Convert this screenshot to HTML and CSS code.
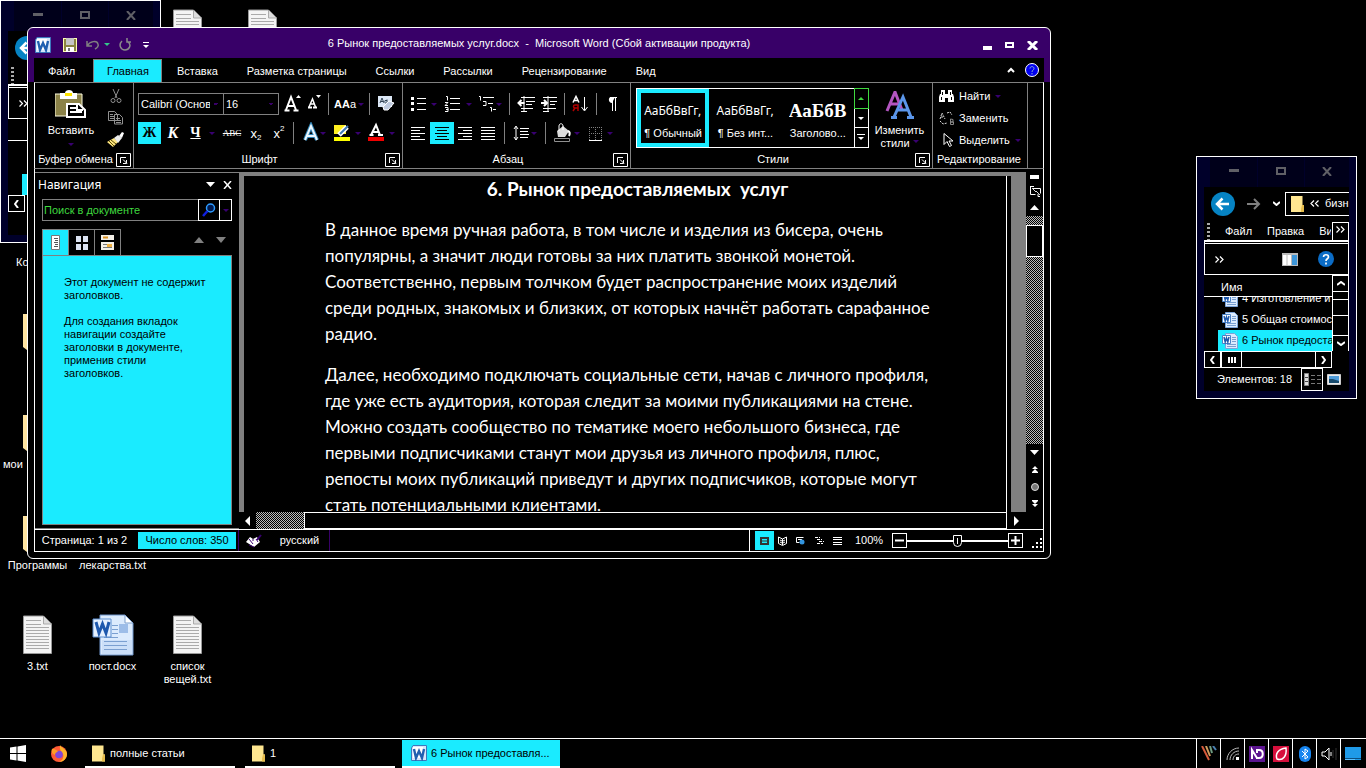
FILE: index.html
```html
<!DOCTYPE html>
<html lang="ru">
<head>
<meta charset="utf-8">
<title>6 Рынок предоставляемых услуг.docx - Microsoft Word</title>
<link rel="stylesheet" href="styles.css">
</head>
<body>
<svg class="defs" aria-hidden="true">
  <symbol id="txt" viewBox="0 0 30 40"><path d="M.5 1h20l8 8v29.500h-28z" fill="#f4f4f4" stroke="#999"/><path d="M20.500 1v8h8" fill="#ddd" stroke="#aaa"/><path d="M3 5.500h15M3 9.500h15M3 12.500h23M3 15.500h23M3 18.500h23M3 21.500h23M3 24.500h23M3 27.500h23M3 30.500h23M3 33.500h23" stroke="#aaa"/></symbol>
  <symbol id="folder" viewBox="0 0 13 16"><path d="M0 0h11.500v9H13v7H0z" fill="#ffe690"/><path d="M11 9h2v7h-3v-3z" fill="#e8bd4c"/></symbol>
  <symbol id="docx" viewBox="0 0 42 42"><path d="M8 1h25l8 8v32H8z" fill="#dcebfd" stroke="#6e95cb"/><path d="M10 26h30v14H10z" fill="#cbdff8"/><path d="M33 1v8h8z" fill="#fff" stroke="#7d9fcd"/><path d="M12 27.500h23M12 31.500h23M12 35.500h23M20 11.500h6M20 15.500h6M20 19.500h6M12 23.500h14" stroke="#7a9fd0"/><path d="M27 10h9v9h-9z" fill="#9dbde8"/><path d="M1 5h18v18H1z" fill="#e6f1ff" stroke="#5c8fd0"/><path d="M4 8l3 11 3.500-9L14 19l3-11" fill="none" stroke="#1f59ad" stroke-width="3"/></symbol>
  <symbol id="docs" viewBox="0 0 16 16"><path d="M3.500 .5h9l3 3v12h-12z" fill="#dcebfd" stroke="#7ba3d8"/><path d="M10 4.500h4M10 6.500h4M10 8.500h4M5 11.500h9M5 13.500h9" stroke="#7a9fd0"/><path d="M.500 2.500h8v8h-8z" fill="#fff" stroke="#4b83c8"/><path d="M2 4l1.200 5 1.300-4 1.300 4L7 4" fill="none" stroke="#1f59ad" stroke-width="1.500"/></symbol>
  <symbol id="word" viewBox="0 0 16 16"><path d="M2 .5h13.500v15H.5V3z" fill="#d5e6fa" stroke="#3c78bd"/><path d="M2 2h10v11H2z" fill="#fff"/><path d="M3 4l2 9 3-7 3 7 2-9" fill="none" stroke="#2060b0" stroke-width="2.400"/></symbol>
  <symbol id="launch" viewBox="0 0 15 14"><path d="M.5.500h14v13H.5z" fill="#000" stroke="#fff"/><path d="M4.500 10V4.500H10M7 6.500l4 4M10.500 7v3.500H7" fill="none" stroke="#fff"/></symbol>
  <symbol id="down" viewBox="0 0 6 3"><path d="M0 0h6L3 3z" fill="#380070"/></symbol>
  <symbol id="back" viewBox="0 0 24 24"><circle cx="12" cy="12" r="12" fill="#0683c3"/><path d="M18 12H7M11.500 6.500L6 12l5.500 5.500" fill="none" stroke="#fff" stroke-width="2.500"/></symbol>
  <symbol id="chev" viewBox="0 0 9 7"><path d="M.5.500l3 3-3 3M5 .5l3 3-3 3" fill="none" stroke="#fff" stroke-width="1.200"/></symbol>
  <symbol id="preview" viewBox="0 0 16 13"><path d="M0 0h16v13H0z" fill="#b9b9b9"/><path d="M1 2h8v10H1z" fill="#fff"/><path d="M5 2v10" stroke="#bbb"/><path d="M10 2h5v10h-5z" fill="#3d96d9"/></symbol>
  <symbol id="help" viewBox="0 0 16 16"><circle cx="8" cy="8" r="8" fill="#0b6cc6"/><path d="M5.500 6c0-3 5-3 5 0 0 2-2.500 1.500-2.500 4M8 11.500v2" fill="none" stroke="#fff" stroke-width="1.700"/></symbol>
  <symbol id="details" viewBox="0 0 17 13"><path d="M.5.500h4v12h-4z" fill="#ddd" stroke="#888"/><path d="M1 4.500h3M1 8.500h3" stroke="#444"/><path d="M7 2.500h4M13 2.500h4M7 6.500h4M13 6.500h4M7 10.500h4M13 10.500h4" stroke="#777"/></symbol>
  <symbol id="thumbs" viewBox="0 0 14 11"><path d="M.5.500h13v10H.5z" fill="#e9e9e9" stroke="#ccc"/><path d="M2 2h10v7H2z" fill="#4e9bd8"/><path d="M2 5h4l6 2v2H2z" fill="#174a6c"/></symbol>
</svg>

<main class="desktop">
  <section class="icons" aria-label="Рабочий стол">
    <a class="shortcut c3 r1" href="#"><svg width="30" height="40"><use href="#txt"/></svg></a>
    <a class="shortcut c4 r1" href="#"><svg width="30" height="40"><use href="#txt"/></svg></a>
    <a class="shortcut c1 r3 cut" href="#"><span>Ко</span></a>
    <a class="shortcut c1 r4" href="#"><svg width="30" height="36" viewBox="0 0 30 36"><path d="M0 0h26v18h4v18H4l-4-3z" fill="#ffe4a0"/></svg></a>
    <a class="shortcut c1 r5 cut-long" href="#"><svg width="30" height="36" viewBox="0 0 30 36"><path d="M0 0h26v18h4v18H4l-4-3z" fill="#ffe4a0"/></svg><span>мои</span></a>
    <a class="shortcut c1 r6" href="#"><svg width="30" height="36" viewBox="0 0 30 36"><path d="M0 0h26v18h4v18H4l-4-3z" fill="#ffe4a0"/></svg><span>Программы</span></a>
    <a class="shortcut c2 r6" href="#"><span>лекарства.txt</span></a>
    <a class="shortcut c1 r7" href="#"><svg width="30" height="40"><use href="#txt"/></svg><span>3.txt</span></a>
    <a class="shortcut c2 r7" href="#"><svg width="42" height="42"><use href="#docx"/></svg><span>пост.docx</span></a>
    <a class="shortcut c3 r7" href="#"><svg width="30" height="40"><use href="#txt"/></svg><span>список вещей.txt</span></a>
  </section>

  <section class="explorer explorer-left" aria-label="Проводник">
    <header class="ex-title">
      <button aria-label="Свернуть"><svg width="10" height="4"><path d="M0 0h10v3H0z" fill="#606066"/></svg></button>
      <button aria-label="Развернуть"><svg width="10" height="8"><path d="M1 1h8v6H1z" fill="none" stroke="#606066" stroke-width="2"/></svg></button>
      <button aria-label="Закрыть"><svg width="10" height="9"><path d="M1 0l8 9M9 0L1 9" stroke="#606066" stroke-width="2"/></svg></button>
    </header>
    <div class="ex-nav"><button aria-label="Назад"><svg width="24" height="24"><use href="#back"/></svg></button></div>
    <div class="ex-menu"><i class="dots"></i></div>
    <div class="ex-tools"><button aria-label="Ещё"><svg width="9" height="7"><use href="#chev"/></svg></button></div>
    <div class="ex-body"><div class="ex-list"><div class="ex-head"></div><div class="ex-rows"><a href="#" aria-label="Файл"></a><a href="#" aria-label="Файл"></a><a class="sel" href="#" aria-label="Файл"></a></div></div></div>
    <div class="ex-hscroll"><button aria-label="Влево"><svg width="5" height="8"><path d="M4 0L1 4l3 4" fill="none" stroke="#fff" stroke-width="2"/></svg></button></div>
    <footer class="ex-status"></footer>
  </section>

  <section class="explorer explorer-right" aria-label="бизнес">
    <header class="ex-title">
      <button aria-label="Свернуть"><svg width="10" height="4"><path d="M0 0h10v3H0z" fill="#606066"/></svg></button>
      <button aria-label="Развернуть"><svg width="10" height="8"><path d="M1 1h8v6H1z" fill="none" stroke="#606066" stroke-width="2"/></svg></button>
      <button aria-label="Закрыть"><svg width="10" height="9"><path d="M1 0l8 9M9 0L1 9" stroke="#606066" stroke-width="2"/></svg></button>
    </header>
    <div class="ex-nav">
      <button aria-label="Назад"><svg width="24" height="24"><use href="#back"/></svg></button>
      <button aria-label="Вперёд"><svg width="14" height="12"><path d="M0 6h12M7 1l5 5-5 5" fill="none" stroke="#808080" stroke-width="2"/></svg></button>
      <button aria-label="История"><svg width="7" height="5"><path d="M0 1l3.500 3L7 1" fill="none" stroke="#fff" stroke-width="2"/></svg></button>
      <div class="address"><svg width="13" height="16"><use href="#folder"/></svg><svg class="flip" width="9" height="7"><use href="#chev"/></svg><span>бизн</span></div>
    </div>
    <nav class="ex-menu"><i class="dots"></i><a href="#">Файл</a><a href="#">Правка</a><a href="#">Ви</a><button aria-label="Ещё"><svg width="9" height="7"><use href="#chev"/></svg></button></nav>
    <div class="ex-tools"><button aria-label="Ещё"><svg width="9" height="7"><use href="#chev"/></svg></button><button class="push" aria-label="Область просмотра"><svg width="16" height="13"><use href="#preview"/></svg></button><button aria-label="Справка"><svg width="16" height="16"><use href="#help"/></svg></button></div>
    <div class="ex-body">
      <div class="ex-list">
        <div class="ex-head">Имя</div>
        <div class="ex-rows">
          <a href="#"><svg width="16" height="16"><use href="#docs"/></svg>4 Изготовление и</a>
          <a href="#"><svg width="16" height="16"><use href="#docs"/></svg>5 Общая стоимос</a>
          <a class="sel" href="#"><svg width="16" height="16"><use href="#docs"/></svg>6 Рынок предоста</a>
        </div>
      </div>
      <div class="ex-vscroll">
        <button aria-label="Вверх"><svg width="8" height="5"><path d="M0 4l4-3 4 3" fill="none" stroke="#fff" stroke-width="2"/></svg></button>
        <span class="v1"></span><span class="v2"></span><span class="v3"></span>
        <button aria-label="Вниз"><svg width="8" height="5"><path d="M0 1l4 3 4-3" fill="none" stroke="#fff" stroke-width="2"/></svg></button>
      </div>
    </div>
    <div class="ex-hscroll">
      <button aria-label="Влево"><svg width="5" height="8"><path d="M4 0L1 4l3 4" fill="none" stroke="#fff" stroke-width="2"/></svg></button>
      <span class="ex-thumb"><svg width="8" height="6"><path d="M1 0v6M4 0v6M7 0v6" stroke="#fff" stroke-width="2"/></svg></span><span class="ex-track"></span>
      <button aria-label="Вправо"><svg width="5" height="8"><path d="M1 0l3 4-3 4" fill="none" stroke="#fff" stroke-width="2"/></svg></button>
    </div>
    <footer class="ex-status"><span>Элементов: 18</span><button class="boxed" aria-label="Таблица"><svg width="17" height="13"><use href="#details"/></svg></button><button aria-label="Эскизы"><svg width="14" height="11"><use href="#thumbs"/></svg></button></footer>
  </section>

  <section class="word" aria-label="Microsoft Word">
    <header class="titlebar">
      <div class="quick">
        <svg width="16" height="16"><use href="#word"/></svg>
        <button aria-label="Сохранить"><svg width="14" height="14"><path d="M0 0h14v14H0z" fill="#ffffb0"/><path d="M1 1h12v12H1z" fill="#8a8440"/><path d="M3 0h8v7H3z" fill="#c6c6c6"/><path d="M3 9h8v5H3z" fill="#fff"/><path d="M5 10h2v3H5z" fill="#777"/></svg></button>
        <button aria-label="Отменить"><svg width="24" height="10"><path d="M1 1v5h5M1 6c3-5 10-6 11-2 1 2-1 4-3 5" fill="none" stroke="#808080" stroke-width="1.500"/><path d="M18 3h6l-3 3z" fill="#35c88a"/></svg></button>
        <button aria-label="Повторить"><svg width="12" height="13"><path d="M3 3C-1 7 2 12 6 12s7-5 3-8M8 0v4h4" fill="none" stroke="#8a8a8a" stroke-width="1.500"/></svg></button>
        <button class="more" aria-label="Настройка"><svg width="6" height="6"><path d="M0 0h6v1H0zM0 3h6L3 6z" fill="#fff"/></svg></button>
      </div>
      <h1>6 Рынок предоставляемых услуг.docx&nbsp; - &nbsp;Microsoft Word (Сбой активации продукта)</h1>
      <div class="winbtns">
        <button aria-label="Свернуть"><svg width="10" height="10"><path d="M0 6h9v4H0z" fill="#fff"/></svg></button>
        <button aria-label="Развернуть"><svg width="10" height="8"><path d="M1 2h7v4H1z" fill="none" stroke="#fff" stroke-width="2"/></svg></button>
        <button aria-label="Закрыть"><svg width="12" height="9"><path d="M1 0l9 9M10 0L1 9" stroke="#fff" stroke-width="3"/></svg></button>
      </div>
    </header>
    <nav class="tabs">
      <a href="#">Файл</a><a class="on" href="#">Главная</a><a href="#">Вставка</a><a href="#">Разметка страницы</a><a href="#">Ссылки</a><a href="#">Рассылки</a><a href="#">Рецензирование</a><a href="#">Вид</a>
      <span class="tabs-end">
        <button aria-label="Свернуть ленту"><svg width="8" height="6"><path d="M1 5l3-3 3 3" fill="none" stroke="#fff" stroke-width="2"/></svg></button>
        <button aria-label="Справка"><svg width="14" height="14"><circle cx="7" cy="7" r="6.500" fill="#0000f0" stroke="#fff"/><path d="M5 5.500c0-2.500 4-2.500 4 0C9 7 7 7 7 9M7 10v1.500" fill="none" stroke="#8ac"/></svg></button>
      </span>
    </nav>

    <div class="ribbon">
      <section class="group g-clip">
        <div class="clip">
          <button class="paste"><svg width="32" height="28" viewBox="0 0 32 28"><path d="M0 4h27v22H0z" fill="#8b8248" stroke="#fffde0"/><path d="M5 3h5c0-4 8-4 8 0h4v6H5z" fill="#fff"/><path d="M10 3h7v3h-7z" fill="#ffe400"/><path d="M12 14h12l6 6v7H12z" fill="#000" stroke="#fff" stroke-width="2"/><path d="M15 18h6M15 22h12M22 15v5h6" stroke="#fff" fill="none" stroke-width="2"/></svg><span>Вставить</span><svg width="6" height="3"><use href="#down"/></svg></button>
          <div class="clip-side">
            <button aria-label="Вырезать"><svg width="12" height="15"><path d="M3 0l4 9M9 0L5 9" stroke="#909090"/><circle cx="3" cy="11.500" r="2" fill="none" stroke="#909090"/><circle cx="9" cy="11.500" r="2" fill="none" stroke="#909090"/></svg></button>
            <button aria-label="Копировать"><svg width="16" height="14"><path d="M.5.500h6l3 3v6h-9zM6.500 3.500h5l3 3v6.500h-8z" fill="#000" stroke="#909090"/><path d="M2 3.500h3M2 5.500h4M2 7.500h4M8 7.500h4M8 9.500h5M8 11.500h5" stroke="#909090"/></svg></button>
            <button aria-label="Формат по образцу"><svg width="17" height="16"><path d="M0 10l7-4 4 4-5 5z" fill="#ffe680"/><path d="M2 9l5 5M4 8l5 4" stroke="#5c4b00"/><path d="M7 6l4-3 4 3-4 5z" fill="#eee"/><path d="M12 4l3-4 2 1-2 5z" fill="#fff"/></svg></button>
          </div>
        </div>
        <footer><b>Буфер обмена</b><button aria-label="Параметры"><svg width="15" height="14"><use href="#launch"/></svg></button></footer>
      </section>

      <section class="group g-font">
        <div class="tools">
          <select class="font-name" aria-label="Шрифт"><option>Calibri (Основн</option></select><select class="font-size" aria-label="Размер"><option>16</option></select>
          <button aria-label="Увеличить"><svg width="24" height="22"><path d="M5.500 17.500h5M14.500 17.500h5" stroke="#fff" stroke-width="2"/><path d="M7 17l5-13 5 13M9 13h6" stroke="#fff" stroke-width="2" fill="none"/><path d="M17 5h5l-2.500-3z" fill="#fff"/></svg></button>
          <button aria-label="Уменьшить"><svg width="22" height="22"><path d="M5 14.500h4M10 14.500h4" stroke="#fff" stroke-width="2"/><path d="M6 14l3.500-8 3 8M7 11h4" stroke="#fff" stroke-width="1.500" fill="none"/><path d="M13 2h5l-2.500 3z" fill="#fff"/></svg></button>
          <i class="sep"></i>
          <button class="case"><b>AA</b>a<svg width="6" height="3"><use href="#down"/></svg></button>
          <i class="sep"></i>
          <button aria-label="Очистить"><svg width="24" height="22"><path d="M5 3h14v11H5z" fill="#dce7f5"/><path d="M7 10l2-5 2 5M8 8.500h2M14 7.500h-2c-1 3 2 3 2 2v-3" stroke="#345" fill="none"/><path d="M10 14l6-6 5 2-6 7h-4z" fill="#bfcbe0" stroke="#fff"/></svg></button>
        </div>
        <div class="tools">
          <button class="on bold">Ж</button><button class="ital">К</button><button class="under"><u>Ч</u><svg width="6" height="3"><use href="#down"/></svg></button><button class="strike">ABC</button><button class="idx">x<sub>2</sub></button><button class="idx">x<sup>2</sup></button><i class="sep"></i>
          <button aria-label="Эффекты"><svg width="31" height="22"><path d="M8 18l6-14 6 14M10 14h8" stroke="#2f83b5" stroke-width="4" fill="none"/><path d="M8 18l6-14 6 14M10 14h8" stroke="#eaf7ff" stroke-width="2" fill="none"/><path d="M23 10h6l-3 3z" fill="#380070"/></svg></button>
          <button aria-label="Цвет выделения"><svg width="35" height="22"><path d="M6 3h12v9H6z" fill="#ffef20"/><path d="M6 15h16v4H6z" fill="#ffff00"/><path d="M11 13l8-8" stroke="#fff" stroke-width="5"/><path d="M12 12l8-8" stroke="#3f79b5" stroke-width="2"/><path d="M27 10h6l-3 3z" fill="#380070"/></svg></button>
          <button aria-label="Цвет текста"><svg width="35" height="22"><path d="M5 15h16v4H5z" fill="#f00000"/><path d="M8 13l5-10 4 10M10 10h6M6.500 13h4M15 13h5" stroke="#fff" stroke-width="2" fill="none"/><path d="M26 10h6l-3 3z" fill="#380070"/></svg></button>
        </div>
        <footer><b>Шрифт</b><button aria-label="Параметры"><svg width="15" height="14"><use href="#launch"/></svg></button></footer>
      </section>

      <section class="group g-par">
        <div class="tools">
          <button aria-label="Маркеры"><svg width="35" height="22"><path d="M5 4h3v3H5zM5 9h3v3H5zM5 15h3v3H5z" fill="#fff"/><path d="M11 5.500h9M11 10.500h9M11 16.500h9" stroke="#fff"/><path d="M25 10h6l-3 3z" fill="#380070"/></svg></button>
          <button aria-label="Нумерация"><svg width="35" height="22"><path d="M5 3.500h1.500v4M4 9.500h3l-3 3h3M4 14.500h3v2H5M7 16v2.500H4M9 5.500h10M9 10.500h10M9 16.500h10" stroke="#fff" fill="none"/><path d="M25 10h6l-3 3z" fill="#380070"/></svg></button>
          <button aria-label="Многоуровневый"><svg width="30" height="22"><path d="M3 3.500h1.500v4M7 4.500h11M7 8.500h3v4M7 12.500h3M12 10.500h5M14 14.500h1.500v4M17 16.500h3" stroke="#fff" fill="none"/><path d="M20 10h6l-3 3z" fill="#380070"/></svg></button>
          <i class="sep"></i>
          <button aria-label="Уменьшить отступ"><svg width="24" height="22"><path d="M8 4.500h14M13 8.500h9M13 11.500h6M8 15.500h12M8 18.500h6M11 3v16" stroke="#fff"/><path d="M5.500 10h6M8.500 7l-3 3 3 3" stroke="#fff" stroke-width="2" fill="none"/></svg></button>
          <button aria-label="Увеличить отступ"><svg width="24" height="22"><path d="M6 4.500h14M13 8.500h7M13 11.500h5M6 15.500h13M6 18.500h6M11 3v16" stroke="#fff"/><path d="M4 10h6M7 7l3 3-3 3" stroke="#fff" stroke-width="2" fill="none"/></svg></button>
          <i class="sep"></i>
          <button aria-label="Сортировка"><svg width="25" height="22"><path d="M5 9.500l3-6 3 6M6 7.500h4" stroke="#fff" fill="none" stroke-width="1.500"/><path d="M10 18v-6H7c-2 0-2 3 0 3h3M7 15l-2 3" stroke="#b00000" fill="none" stroke-width="1.500"/><path d="M16.500 4v13M13.500 14l3 4 3-4" stroke="#fff" fill="none"/></svg></button>
          <i class="sep"></i>
          <button aria-label="Знаки"><svg width="24" height="22"><path d="M15 4H11c-3 0-3 6 1 6z" fill="#fff"/><path d="M10 4.500h7M12.500 4v14M15.500 4v14" stroke="#fff" fill="none"/></svg></button>
        </div>
        <div class="tools">
          <button aria-label="По левому краю"><svg width="24" height="22"><path d="M5 5.500h14M5 8.500h9M5 11.500h14M5 14.500h9M5 17.500h14" stroke="#fff"/></svg></button>
          <button class="on" aria-label="По центру"><svg width="24" height="22"><path d="M5 5.500h14M7 8.500h10M5 11.500h14M7 14.500h10M5 17.500h14" stroke="#000"/></svg></button>
          <button aria-label="По правому краю"><svg width="24" height="22"><path d="M4 5.500h14M9 8.500h9M4 11.500h14M9 14.500h9M4 17.500h14" stroke="#fff"/></svg></button>
          <button aria-label="По ширине"><svg width="23" height="22"><path d="M3 5.500h14M3 8.500h14M3 11.500h14M3 14.500h14M3 17.500h14" stroke="#fff"/></svg></button>
          <i class="sep"></i>
          <button aria-label="Интервал"><svg width="34" height="22"><path d="M8 5v13M6 7l2-3 2 3M6 15l2 3 2-3M12 6.500h9M12 9.500h8M12 12.500h9M12 15.500h8" stroke="#fff" fill="none"/><path d="M23 10h6l-3 3z" fill="#380070"/></svg></button>
          <i class="sep"></i>
          <button aria-label="Заливка"><svg width="35" height="22"><path d="M8 9l6-5 6 5-4 6H9z" fill="#ddd"/><path d="M10 9V4c0-3 4-3 4 0v4" stroke="#fff" fill="none"/><path d="M19 9c2 1 2 3 1 5" stroke="#fff" stroke-width="2" fill="none"/><path d="M5.500 16.500h15v3h-15z" stroke="#909090" fill="#000"/><path d="M25 10h6l-3 3z" fill="#380070"/></svg></button>
          <button aria-label="Границы"><svg width="35" height="22"><path d="M5.500 5v13M11.500 5v13M17.500 5v13M5 5.500h13M5 11.500h13" stroke="#808080" stroke-dasharray="1 1"/><path d="M5 18.500h13" stroke="#fff"/><path d="M23 10h6l-3 3z" fill="#380070"/></svg></button>
        </div>
        <footer><b>Абзац</b><button aria-label="Параметры"><svg width="15" height="14"><use href="#launch"/></svg></button></footer>
      </section>

      <section class="group g-styles">
        <div class="styles-row">
          <div class="gallery">
            <button class="style chosen"><span class="sample">АаБбВвГг,</span><span>¶ Обычный</span></button>
            <button class="style"><span class="sample">АаБбВвГг,</span><span>¶ Без инт...</span></button>
            <button class="style"><span class="sample heading">АаБбВ</span><span>Заголово...</span></button>
            <div class="gal-scroll">
              <button class="green" aria-label="Вверх"><svg width="6" height="3"><path d="M0 3h6L3 0z" fill="#3fd83f"/></svg></button>
              <button aria-label="Вниз"><svg width="6" height="3"><path d="M0 0h6L3 3z" fill="#fff"/></svg></button>
              <button aria-label="Ещё"><svg width="8" height="7"><path d="M0 .5h8" stroke="#fff"/><path d="M1 3h6L4 6z" fill="#fff"/></svg></button>
            </div>
          </div>
          <button class="change"><svg width="30" height="28"><path d="M2 20L10 1l7 18M5 13h9" fill="none" stroke="#b355c0" stroke-width="3"/><path d="M9 26L18 6l8 20M12 19h11M6 26.500h6M22 26.500h7" fill="none" stroke="#5b96ea" stroke-width="3"/></svg><span>Изменить</span><span>стили <svg width="6" height="3"><use href="#down"/></svg></span></button>
        </div>
        <footer><b>Стили</b><button aria-label="Параметры"><svg width="15" height="14"><use href="#launch"/></svg></button></footer>
      </section>

      <section class="group g-edit">
        <div class="edit">
          <button><svg width="15" height="14"><path d="M2 1h4v4H2zM9 1h4v4H9zM1 5h5v8H0V8zM9 5h5l1 3v5H9zM6 5h3v4H6z" fill="#fff"/><path d="M3.500 3v3M11.500 3v3M2.500 8v3M12.500 8v3" stroke="#000"/></svg>Найти<svg class="arr" width="6" height="3"><use href="#down"/></svg></button>
          <button><svg width="15" height="14"><path d="M1 8l2-6 3 6M2 6h3M8 2l3-1 2 3M1 10l3 3 4-1" stroke="#ddd" fill="none" stroke-dasharray="2 1"/><path d="M11.500 8v5.500h3v-2.500h-3 2.500V8.500z" stroke="#888" fill="none"/></svg>Заменить</button>
          <button><svg width="15" height="15"><path d="M5 .500v11l3-3 2.500 5 2-1-2.500-4.500h4z" fill="#000" stroke="#fff"/></svg>Выделить<svg class="arr" width="6" height="3"><use href="#down"/></svg></button>
        </div>
        <footer><b>Редактирование</b></footer>
      </section>
    </div>

    <div class="work">
      <aside class="nav">
        <header><h2>Навигация</h2><button aria-label="Параметры"><svg width="9" height="5"><path d="M0 0h9L4.500 5z" fill="#fff"/></svg></button><button aria-label="Закрыть"><svg width="9" height="8"><path d="M1 0l7 8M8 0L1 8" stroke="#fff" stroke-width="1.500"/></svg></button></header>
        <div class="search"><input type="text" placeholder="Поиск в документе" aria-label="Поиск в документе"><button aria-label="Найти"><svg width="14" height="14"><circle cx="8.500" cy="5" r="4" fill="#001a50" stroke="#2d9cff" stroke-width="1.500"/><path d="M5.500 8L1 13" stroke="#1020e0" stroke-width="2.500"/></svg></button><button class="thin" aria-label="Параметры поиска"><svg width="6" height="3"><use href="#down"/></svg></button></div>
        <div class="nav-tabs">
          <button class="on" aria-label="Заголовки"><svg width="10" height="16"><path d="M.5.500h8v14h-8z" fill="#fff" stroke="#777"/><path d="M3 3.500h4M4 5.500h3M3 7.500h4M4 9.500h3M3 11.500h4" stroke="#555"/></svg></button>
          <button aria-label="Страницы"><svg width="12" height="14"><path d="M0 0h5v6H0zM7 0h5v6H7zM0 8h5v6H0zM7 8h5v6H7z" fill="#dce3f2"/></svg></button>
          <button aria-label="Результаты"><svg width="13" height="16"><path d="M0 0h13v5H0zM0 7h13v8H0z" fill="#f4f0e8"/><path d="M2 2.500h5" stroke="#d99020" stroke-width="2"/><path d="M6 9h5v4H6z" fill="#f0b040"/><path d="M2 9.500h4M2 12.500h9" stroke="#777"/></svg></button>
          <span><button aria-label="Предыдущий"><svg width="10" height="6"><path d="M0 6h10L5 0z" fill="#808080"/></svg></button><button aria-label="Следующий"><svg width="10" height="6"><path d="M0 0h10L5 6z" fill="#808080"/></svg></button></span>
        </div>
        <div class="nav-body"><p>Этот документ не содержит заголовков.</p><p>Для создания вкладок навигации создайте заголовки в документе,<br>применив стили<br>заголовков.</p></div>
      </aside>

      <div class="doc">
        <article class="page">
          <h2>6. Рынок предоставляемых&nbsp; услуг</h2>
          <p>В данное время ручная работа, в том числе и изделия из бисера, очень<br>популярны, а значит люди готовы за них платить звонкой монетой.<br>Соответственно, первым толчком будет распространение моих изделий<br>среди родных, знакомых и близких, от которых начнёт работать сарафанное<br>радио.</p>
          <p>Далее, необходимо подключать социальные сети, начав с личного профиля,<br>где уже есть аудитория, которая следит за моими публикациями на стене.<br>Можно создать сообщество по тематике моего небольшого бизнеса, где<br>первыми подписчиками станут мои друзья из личного профиля, плюс,<br>репосты моих публикаций приведут и других подписчиков, которые могут<br>стать потенциальными клиентами.</p>
        </article>
        <div class="hscroll"><button aria-label="Влево"><svg width="5" height="10"><path d="M5 0v10L0 5z" fill="#fff"/></svg></button><i class="gap"></i><i class="thumb"></i><button class="end" aria-label="Вправо"><svg width="5" height="10"><path d="M0 0v10l5-5z" fill="#fff"/></svg></button></div>
      </div>
      <div class="vscroll">
        <i class="split"></i>
        <button aria-label="Линейка"><svg width="12" height="12"><path d="M1 1.500h4M1.500 1v8.500h5M3 3.500h8.500v5M9 9v2.500h2" stroke="#fff" fill="none"/><path d="M3 3l4 4M7 6l4 4" stroke="#ddd"/></svg></button>
        <button aria-label="Вверх"><svg width="9" height="5"><path d="M0 5h9L4.500 0z" fill="#fff"/></svg></button>
        <div class="track"><i></i></div>
        <button aria-label="Вниз"><svg width="9" height="5"><path d="M0 0h9L4.500 5z" fill="#fff"/></svg></button>
        <button aria-label="Предыдущая"><svg width="6" height="7"><path d="M0 3h6L3 0zM0 6h6L3 3z" fill="#fff"/><path d="M0 6.500h6" stroke="#fff"/></svg></button>
        <button aria-label="Объект"><svg width="8" height="8"><circle cx="4" cy="4" r="3.500" fill="#777" stroke="#ddd"/></svg></button>
        <button aria-label="Следующая"><svg width="6" height="7"><path d="M0 1h6L3 4zM0 4h6L3 7z" fill="#fff"/><path d="M0 .5h6" stroke="#fff"/></svg></button>
      </div>
    </div>

    <footer class="status">
      <button class="pages">Страница: 1 из 2</button>
      <button class="words">Число слов: 350</button>
      <button class="proof" aria-label="Правописание"><svg width="16" height="14"><path d="M0 8l4-5 3 2 4-2 3 5-6 5z" fill="#fff"/><path d="M3 5l4 5M7 5v2M10 5l2 3M3 11l5 2" stroke="#380070"/><path d="M11 6l4-5" stroke="#380070" stroke-width="2"/></svg></button>
      <button class="lang">русский</button>
      <div class="views">
        <button class="on" aria-label="Разметка"><svg width="9" height="8"><path d="M1 1h7v6H1z" fill="none" stroke="#333" stroke-width="2"/><path d="M2 4h5" stroke="#333"/></svg></button>
        <button aria-label="Чтение"><svg width="10" height="10"><path d="M.500 1l4 2 4-2v6.500l-4 2-4-2zM4.500 3v6M2 4l2 1M2 6l2 1M7 4L5 5M7 6L5 7" fill="none" stroke="#fff"/></svg></button>
        <button aria-label="Веб"><svg width="10" height="10"><path d="M7.500 1.500h-7v5h3M2 3.500h4" fill="none" stroke="#fff"/><circle cx="6" cy="6" r="2.500" fill="#3395e0"/></svg></button>
        <button aria-label="Структура"><svg width="9" height="8"><path d="M0 .5h5M2 2.500h5M4 4.500h5M2 6.500h6" stroke="#fff" stroke-dasharray="3 1"/></svg></button>
        <button aria-label="Черновик"><svg width="9" height="8"><path d="M0 .5h9M0 2.500h9M0 5.500h9M0 7.500h9" stroke="#fff"/></svg></button>
        <button class="pct">100%</button>
        <button class="sq" aria-label="Уменьшить"><svg width="9" height="9"><path d="M0 4.500h9" stroke="#fff" stroke-width="2"/></svg></button>
        <input type="range" min="0" max="100" value="50" aria-label="Масштаб">
        <button class="sq" aria-label="Увеличить"><svg width="9" height="9"><path d="M0 4.500h9M4.500 0v9" stroke="#fff" stroke-width="2"/></svg></button>
        <svg class="grip" width="11" height="11"><path d="M9 1h2v2H9zM5 5h2v2H5zM9 5h2v2H9zM1 9h2v2H1zM5 9h2v2H5zM9 9h2v2H9z" fill="#fff"/></svg>
      </div>
    </footer>
  </section>
</main>

<footer class="taskbar">
  <button class="launcher" aria-label="Пуск"><svg width="16" height="17"><path d="M0 2.500l6.500-1V8H0zM7.500 1.400L16 0v8H7.500zM0 9h6.500v6.500l-6.500-1zM7.500 9H16v8l-8.500-1.400z" fill="#fff"/></svg></button>
  <button class="launcher fox" aria-label="Firefox"><svg width="16" height="17"><circle cx="8" cy="9" r="8" fill="#ff5a36"/><path d="M9 0c1 3 7 4 7 9 0 4-3 8-8 8 4-2 5-5 4-8-1-2-4-4-3-9z" fill="#ffb52b"/><circle cx="8" cy="9.500" r="3.800" fill="#8147d8"/><path d="M1 4c2-1 3 1 6 2-1 2-3 1-3 4-3-1-4-4-3-6z" fill="#ff9c26"/></svg></button>
  <button class="task"><svg width="13" height="17"><use href="#folder"/></svg>полные статьи</button>
  <button class="task"><svg width="13" height="17"><use href="#folder"/></svg>1</button>
  <button class="task active"><svg width="16" height="16"><use href="#word"/></svg>6 Рынок предоставля...</button>
  <div class="tray">
    <button aria-label="V"><svg width="16" height="15"><path d="M1 0l7 14" stroke="#d85b3c" stroke-width="2"/><path d="M5 0l4 10" stroke="#d4a060" stroke-width="2"/><path d="M9 0l2 7" stroke="#6f9c80" stroke-width="2"/><path d="M12 0l3 4" stroke="#4a80b0" stroke-width="2"/></svg></button>
    <button aria-label="Сеть"><svg width="13" height="13"><path d="M1 13C1 7 6 1 13 1M4 13c0-5 4-9 9-9M7 13c0-3 2-6 6-6" fill="none" stroke="#bbb"/><path d="M10 10h3v3h-3z" fill="#fff"/></svg></button>
    <button aria-label="NVDA"><svg width="16" height="16"><path d="M0 0h16v16H0z" fill="#5c1590"/><path d="M3 13V4l5 8M8 7V4h2c5 0 5 8 0 8H7" fill="none" stroke="#fff" stroke-width="2"/></svg></button>
    <button aria-label="Антивирус"><svg width="16" height="16"><path d="M0 0h16v16H0z" fill="#d60f3c"/><path d="M13 2C5 3 2 8 4 13c6 2 10-3 9-11z" fill="none" stroke="#fff" stroke-width="1.500"/></svg></button>
    <button aria-label="Bluetooth"><svg width="12" height="16"><rect width="12" height="16" rx="6" fill="#1685f0"/><path d="M3 5l6 6-3 2V3l3 2-6 6" fill="none" stroke="#fff"/></svg></button>
    <button aria-label="Звук"><svg width="16" height="14"><path d="M1 5h3l4-4v12L4 9H1z" fill="none" stroke="#fff"/><path d="M10 5v4" stroke="#fff"/><path d="M12 3v8M15 1v12" stroke="#333"/></svg></button>
    <button aria-label="Экран"><svg width="16" height="13"><path d="M0 0h16v13H0z" fill="#1f9ae8"/><path d="M0 11.500h16" stroke="#0b4f80"/><path d="M0 12.500h10" stroke="#5cc0ff"/></svg></button>
  </div>
</footer>
</body>
</html>
```
FILE: styles.css
```css
* { box-sizing: border-box; margin: 0; padding: 0; }
:root { --cyan: #1aebff; --purple: #380068; --green: #3fd83f; --grey: #808080; }
html, body { height: 100%; }
body { background: #000; color: #fff; font: 11px/13px "Liberation Sans", Arial, sans-serif; display: flex; flex-direction: column; overflow: hidden; }
button, input, select { font: inherit; color: inherit; background: none; border: 0; border-radius: 0; outline: 0; white-space: nowrap; }
button { display: flex; align-items: center; justify-content: center; }
a { color: inherit; text-decoration: none; }
svg { display: block; flex: none; }
.defs { position: absolute; width: 0; height: 0; }
i { display: block; font-style: normal; }

/* Desktop */
.desktop { position: relative; flex: 1; min-height: 0; }
.icons { display: grid; grid-template-columns: repeat(4, 75px); grid-template-rows: repeat(7, 101px); }
.shortcut { display: grid; grid-template-rows: 42px auto; justify-items: center; align-content: start; gap: 4px; padding-top: 8px; text-align: center; min-width: 0; }
.shortcut svg { align-self: center; }
.shortcut span { grid-row: 2; padding: 0 8px; }
.r6 span { padding: 0; }
.cut { justify-items: start; }
.cut span { padding-left: 16px; }
.cut-long span { justify-self: start; padding-left: 3px; }
.c1 { grid-column: 1; } .c2 { grid-column: 2; } .c3 { grid-column: 3; } .c4 { grid-column: 4; }
.r1 { grid-row: 1; } .r3 { grid-row: 3; } .r4 { grid-row: 4; } .r5 { grid-row: 5; } .r6 { grid-row: 6; } .r7 { grid-row: 7; }

/* Explorer windows */
.explorer { position: absolute; width: 161px; height: 243px; border: 1px solid #fff; background: #00002a; padding: 0 7px 7px; display: grid; grid-template-rows: 30px 35px 19px 34px 1fr 17px 23px; }
.explorer-left { left: 0; top: 0; }
.explorer-right { right: 9px; top: 156px; }
.explorer > * { background: #000; min-width: 0; }
.explorer > .ex-title { background: #00001a; margin-left: 6px; display: grid; grid-template-columns: 47px 47px 1fr; }
.ex-title button { padding-bottom: 2px; }
.ex-title button + button { border-left: 1px solid #00002a; }
.ex-nav { display: flex; align-items: center; padding: 0 0 2px 7px; gap: 12px; overflow: hidden; }
.address { flex: 1; min-width: 0; overflow: hidden; height: 24px; border: 1px solid #fff; border-right: 0; display: flex; align-items: center; gap: 6px; padding-left: 5px; margin-left: -7px; }
.flip { transform: scaleX(-1); }
.ex-menu { display: flex; align-items: center; overflow: hidden; border-bottom: 1px solid #fff; gap: 15px; }
.ex-menu button { width: 17px; flex: none; margin-left: auto; border: 1px solid #fff; border-bottom: 0; height: 19px; background: #000; padding-bottom: 4px; }
.ex-menu a:nth-of-type(3) { width: 12px; overflow: hidden; margin-right: -18px; }
.dots { width: 3px; height: 17px; margin-left: 3px; flex: none; background: repeating-linear-gradient(#aaa 0 2px, #000 2px 4px); }
.ex-tools { border: 1px solid #fff; box-shadow: inset 0 1px #000, inset 0 2px #fff; display: flex; align-items: center; padding: 2px 14px 0 10px; gap: 20px; }
.push { margin-left: auto; }
.ex-body { display: grid; grid-template-columns: 1fr 17px; min-height: 0; }
.ex-list { display: flex; flex-direction: column; min-width: 0; min-height: 0; overflow: hidden; }
.ex-head { flex: none; height: 22px; border-bottom: 1px solid #fff; padding: 6px 17px; }
.ex-rows { flex: 1; min-height: 0; overflow: hidden; display: flex; flex-direction: column; justify-content: flex-end; }
.ex-rows a { flex: none; height: 21px; display: flex; align-items: center; gap: 4px; padding-left: 4px; margin-left: 14px; white-space: nowrap; overflow: hidden; }
.ex-rows .sel { background: var(--cyan); color: #000; }
.ex-vscroll { border: 1px solid #fff; border-bottom: 0; display: flex; flex-direction: column; }
.ex-vscroll button { height: 15px; }
.ex-vscroll span { border-top: 1px solid #fff; }
.v1 { height: 8px; } .v2 { height: 16px; } .v3 { flex: 1; border-bottom: 1px solid #fff; }
.ex-hscroll { display: flex; padding-right: 17px; }
.ex-hscroll button, .ex-thumb { width: 17px; border: 1px solid #fff; }
.ex-thumb { width: 21px; display: flex; align-items: center; justify-content: center; }
.ex-track { flex: 1; border: solid #fff; border-width: 1px 0; }
.ex-status { display: flex; align-items: center; padding-left: 13px; }
.ex-status span { flex: 1; white-space: nowrap; }
.ex-status .boxed { border: 1px solid #fff; width: 22px; height: 23px; margin-right: 4px; }
.ex-status button:last-child { margin-right: 8px; }

/* Word window */
.word { position: absolute; left: 27px; right: 315px; top: 27px; bottom: 179px; border: 1px solid #fff; border-radius: 6px; padding: 0 6px 6px; background: linear-gradient(var(--purple) 54px, #000 54px); display: flex; flex-direction: column; }
.titlebar { flex: none; height: 30px; display: grid; grid-template-columns: 1fr auto 1fr; align-items: center; }
.titlebar h1 { font-size: 11px; font-weight: 400; }
.quick { display: flex; align-items: center; gap: 12px; padding: 3px 0 0 1px; }
.quick button + button { margin-left: -3px; }
.quick .more { margin-left: 0; }
.winbtns { display: flex; align-items: center; justify-content: flex-end; gap: 12px; padding: 4px 5px 0 0; }
.tabs { flex: none; height: 24px; background: #000; display: flex; }
.tabs > a { padding: 7px 15px 0 14px; white-space: nowrap; }
.tabs > a.on { background: var(--cyan); color: #000; border: 1px solid var(--grey); border-bottom: 0; margin: 1px 1px 0 3px; padding: 5px 12px 0 13px; }
.tabs-end { margin-left: auto; display: flex; align-items: center; gap: 10px; padding-right: 5px; }

.ribbon { flex: none; height: 87px; border: solid var(--grey); border-width: 1px 0; border-left: 1px solid #fff; border-right: 1px solid #fff; display: flex; }
.group { display: flex; flex-direction: column; border-right: 1px solid var(--grey); }
.g-clip { width: 99px; } .g-font { width: 269px; } .g-par { width: 228px; } .g-styles { width: 302px; } .g-edit { width: 95px; }
.group footer { margin-top: auto; height: 17px; display: flex; align-items: center; padding-right: 2px; }
.group footer b { flex: 1; font-weight: 400; text-align: center; white-space: nowrap; }
.clip { display: flex; }
.paste { flex-direction: column; width: 72px; padding-top: 7px; gap: 6px; justify-content: flex-start; }
.clip-side { display: flex; flex-direction: column; align-items: center; gap: 7px; padding: 6px 0 0; }
.tools { display: flex; padding-left: 4px; height: 22px; margin-top: 10px; align-items: center; }
.tools + .tools { margin-top: 7px; }
.g-par .tools { padding-left: 3px; }
.tools button { height: 22px; }
.tools .on { background: var(--cyan); color: #000; }
.sep { width: 7px; height: 22px; background: linear-gradient(90deg, transparent 3px, var(--grey) 3px 4px, transparent 4px); }
.font-name, .font-size { appearance: none; height: 22px; border: 1px solid var(--grey); padding: 0 13px 0 2px; width: 86px; overflow: hidden; background: linear-gradient(135deg, var(--purple) 50%, transparent 50%) right 4px center / 3px 3px no-repeat, linear-gradient(225deg, var(--purple) 50%, transparent 50%) right 7px center / 3px 3px no-repeat; }
.font-size { width: 56px; margin-left: -1px; }
.case { width: 34px; gap: 0; font-size: 11px; }
.case b { font-size: 11px; } .case svg { margin-left: 2px; }
.bold { width: 23px; font: 700 14px/16px "Liberation Serif", serif; }
.ital { width: 24px; font: italic 700 16px/18px "Liberation Serif", serif; }
.under { width: 35px; font: 700 14px/16px "Liberation Serif", serif; gap: 8px; }
.strike { width: 24px; font: 9px/11px "Liberation Serif", serif; text-decoration: line-through; }
.idx { width: 24px; font-size: 13px; }
.idx + .idx { width: 22px; }
.idx sub, .idx sup { font-size: 8px; line-height: 8px; }
.idx sub { align-self: flex-end; padding-bottom: 2px; } .idx sup { align-self: flex-start; padding-top: 3px; }
.styles-row { display: flex; padding: 5px 0 0 5px; gap: 5px; }
.gallery { display: flex; width: 233px; height: 60px; border: 1px solid #fff; }
.style { flex: 1; min-width: 0; flex-direction: column; gap: 8px; border: 4px solid transparent; overflow: hidden; padding: 6px 3px 0; }
.chosen { border-color: var(--cyan); }
.sample { width: 58px; overflow: hidden; text-align: left; font: 12px/16px "Noto Sans", sans-serif; }
.sample.heading { font: 700 19px/16px "Liberation Serif", serif; }
.gal-scroll { width: 15px; display: flex; flex-direction: column; margin: -1px -1px -1px 0; }
.gal-scroll button { flex: 1; border: 1px solid #fff; border-top: 0; }
.gal-scroll .green { border: 1px solid var(--green); }
.change { flex-direction: column; justify-content: flex-start; padding-top: 3px; width: 51px; }
.change svg:first-child { margin-bottom: 5px; }
.change span { display: flex; align-items: center; gap: 3px; }
.edit { padding: 2px 0 0 6px; }
.edit button { height: 22px; gap: 5px; }

.work { flex: 1; min-height: 0; display: flex; border: solid #fff; border-width: 0 1px; padding-top: 3px; }
.nav { width: 204px; flex: none; border-top: 1px solid var(--grey); border-bottom: 1px solid var(--grey); display: flex; flex-direction: column; padding: 0 7px 3px; }
.nav header { height: 26px; padding-bottom: 3px; display: flex; align-items: center; gap: 8px; margin-left: -4px; }
.nav h2 { flex: 1; font: 12px/14px "Noto Sans", sans-serif; }
.search { display: flex; height: 22px; border: 1px solid var(--grey); }
.search input { flex: 1; min-width: 0; padding-left: 1px; font-size: 11px; }
.search input::placeholder { color: var(--green); opacity: 1; }
.search button { width: 22px; border: 1px solid #fff; margin: -1px 0; }
.search .thin { width: 13px; margin: -1px; }
.nav-tabs { display: flex; height: 26px; margin-top: 8px; }
.nav-tabs > button { width: 26px; border: 1px solid var(--grey); border-bottom: 0; border-left: 0; }
.nav-tabs .on { background: var(--cyan); width: 27px; border-left: 1px solid var(--grey); margin-bottom: -1px; }
.nav-tabs span { margin: 0 6px 4px auto; display: flex; gap: 12px; }
.nav-body { flex: 1; background: var(--cyan); color: #000; border: 1px solid var(--grey); padding: 20px 20px 0 21px; }
.nav-body p + p { margin-top: 13px; }

.doc { flex: 1; min-width: 0; display: flex; flex-direction: column; background: var(--grey); }
.page { flex: 1; min-height: 0; overflow: hidden; background: #000; margin: 4px 15px 0 5px; padding-left: 81px; box-shadow: inset -4px 0 #000, inset -5px 0 #fff; font: 17px/26px Lato, "Noto Sans", sans-serif; }
.page h2 { font-size: 19px; line-height: 26px; text-align: center; padding-right: 61px; }
.page p { margin-top: 15px; white-space: nowrap; }
.hscroll { flex: none; height: 17px; display: flex; background: #000; }
.hscroll button { width: 17px; }
.gap { width: 48px; background: repeating-conic-gradient(#bbb 0 25%, #000 0 50%) 0 0 / 2px 2px; }
.thumb { flex: 1; border: 1px solid #fff; }
.hscroll .end { width: 19px; }
.vscroll { flex: none; width: 17px; display: flex; flex-direction: column; align-items: center; padding-bottom: 17px; }
.split { width: 9px; height: 4px; background: #fff; margin: 3px 0 3px; }
.vscroll button { height: 17px; }
.track { flex: 1; width: 100%; padding-top: 9px; background: repeating-conic-gradient(#bbb 0 25%, #000 0 50%) 0 0 / 2px 2px; }
.track i { height: 32px; border: 1px solid #fff; background: #000; }

.status { flex: none; height: 23px; border: 1px solid #fff; display: flex; align-items: stretch; }
.status button { height: 21px; }
.pages { width: 103px; padding-right: 4px; }
.status .words { width: 98px; margin: 2px 0; height: 17px; background: var(--cyan); color: #000; }
.proof { width: 35px; border-left: 1px solid var(--purple); margin-left: 2px; padding-right: 4px; }
.lang { width: 57px; border-right: 1px solid var(--purple); padding-right: 3px; }
.views { margin-left: auto; display: flex; align-items: center; border-left: 1px solid #fff; padding-left: 5px; }
.views button { width: 18px; }
.views .on { width: 19px; height: 19px; background: var(--cyan); }
.views .pct { width: 46px; }
.views .sq { width: 15px; height: 15px; border: 1px solid #fff; }
.views input { appearance: none; width: 101px; height: 15px; background: linear-gradient(#fff, #fff) center / 100% 2px no-repeat; }
.views input::-webkit-slider-thumb { appearance: none; width: 9px; height: 12px; background: linear-gradient(#fff, #fff) center / 1px 6px no-repeat #000; border: 1px solid #fff; border-radius: 0 0 5px 5px; }
.grip { margin: 4px 1px 0 8px; }

/* Taskbar */
.taskbar { flex: none; height: 30px; border-top: 1px solid #fff; display: flex; }
.launcher { width: 36px; }
.fox { width: 41px; padding-left: 5px; }
.task { width: 150px; margin: 1px 0 0 8px; border-bottom: 2px solid #fff; justify-content: flex-start; padding-left: 7px; gap: 5px; height: 28px; }
.task + .task { margin-left: 10px; }
.task + .task.active { width: 158px; margin-left: 7px; background: var(--cyan); color: #000; padding-left: 9px; }
.task.active { gap: 4px; }
.tray { margin-left: auto; display: flex; }
.tray button { width: 24px; border-left: 1px solid #fff; }
.tray button:last-child { width: 26px; padding-right: 2px; }
```
